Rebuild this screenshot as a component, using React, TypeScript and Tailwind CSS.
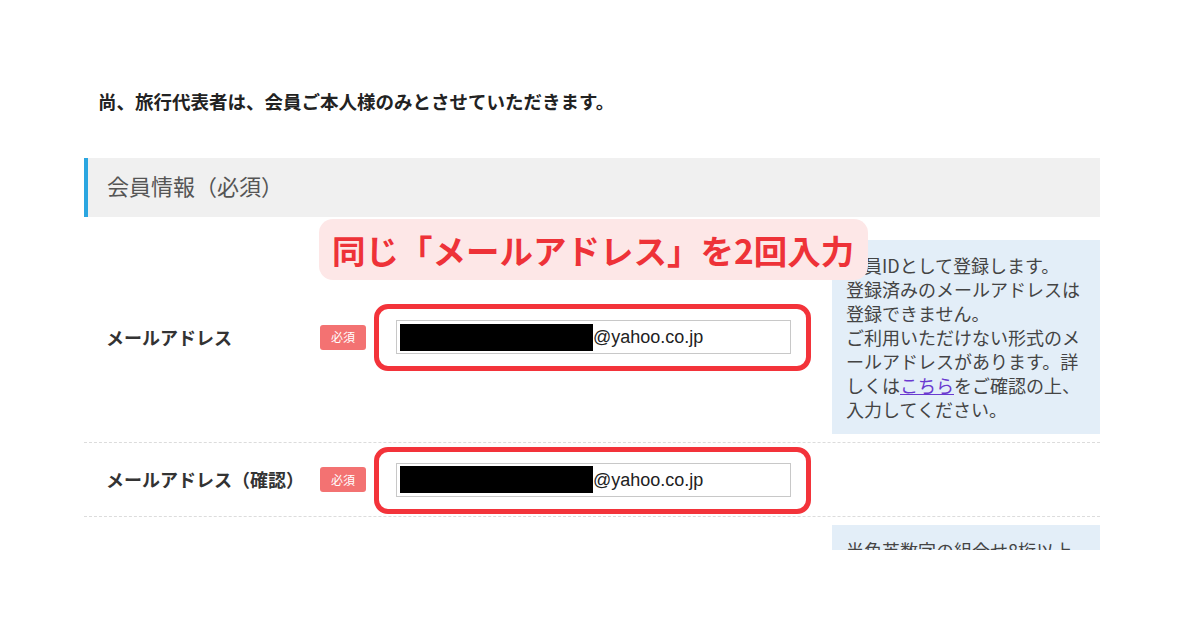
import React from "react";

const jp = { fontFamily: '"Noto Sans CJK JP", sans-serif' };
const mixed = { fontFamily: '"Liberation Sans", "Noto Sans CJK JP", sans-serif' };

function Badge() {
  return (
    <div className="w-[46px] h-[25px] rounded-[3px] bg-[#f37272] text-white text-[12px] flex items-center justify-center shrink-0">
      必須
    </div>
  );
}

function MailInput() {
  return (
    <div className="relative ml-[30px] w-[395px] h-[34px] shrink-0">
      <div className="absolute -left-[22px] -right-[20px] -top-[16px] -bottom-[17px] border-[5px] border-[#f3333a] rounded-[14px]" />
      <div className="w-full h-full border border-[#c8c8c8] bg-white flex items-center pl-[3px]">
        <div className="w-[193px] h-[27px] bg-black" />
        <span className="text-[18px] text-[#222] leading-none" style={mixed}>
          @yahoo.co.jp
        </span>
      </div>
    </div>
  );
}

export default function App() {
  return (
    <div className="w-[1200px] h-[630px] bg-white" style={jp}>
      <div className="relative ml-[84px] w-[1016px] h-[550px] pt-[88px] overflow-hidden">
        <p className="pl-[14px] text-[18.5px] font-bold leading-[26px] text-[#222]">
          尚、旅行代表者は、会員ご本人様のみとさせていただきます。
        </p>

        <div className="mt-[44px] h-[59px] bg-[#f0f0f0] border-l-4 border-[#2ba6e0] flex items-center pl-[19px] pb-[5px]">
          <h2 className="text-[22px] text-[#555]">会員情報（必須）</h2>
        </div>

        {/* row 1 */}
        <div className="flex items-center pt-[23px] pb-[8px] border-b border-dashed border-[#dcdcdc]">
          <div className="w-[236px] pl-[22px] text-[18px] font-bold text-[#333]">メールアドレス</div>
          <Badge />
          <MailInput />
          <div className="ml-auto w-[268px] h-[194px] bg-[#e3eef8] pt-[13px] pl-[14px] text-[18px] leading-[24px] text-[#444]">
            <div>会員IDとして登録します。</div>
            <div>登録済みのメールアドレスは</div>
            <div>登録できません。</div>
            <div>ご利用いただけない形式のメ</div>
            <div>ールアドレスがあります。詳</div>
            <div>
              しくは<span className="text-[#6a3ad0] underline">こちら</span>をご確認の上、
            </div>
            <div>入力してください。</div>
          </div>
        </div>

        {/* row 2 */}
        <div className="flex items-center h-[74px] border-b border-dashed border-[#dcdcdc]">
          <div className="w-[236px] pl-[22px] text-[18px] font-bold text-[#333] whitespace-nowrap">
            メールアドレス（確認）
          </div>
          <Badge />
          <MailInput />
        </div>

        {/* row 3, cut off by the frame */}
        <div className="flex pt-[8px]">
          <div className="ml-auto w-[268px] h-[120px] bg-[#e3eef8] pt-[13px] pl-[14px] text-[18px] leading-[24px] text-[#444]">
            半角英数字の組合せ8桁以上
          </div>
        </div>

        {/* callout */}
        <div className="absolute left-[235px] top-[219px] h-[61px] pl-[13px] pr-[14px] rounded-[14px] bg-[#fde7e7] flex items-center">
          <span className="text-[33.5px] font-bold text-[#ee3238] leading-none">
            同じ「メールアドレス」を2回入力
          </span>
        </div>
      </div>
    </div>
  );
}
